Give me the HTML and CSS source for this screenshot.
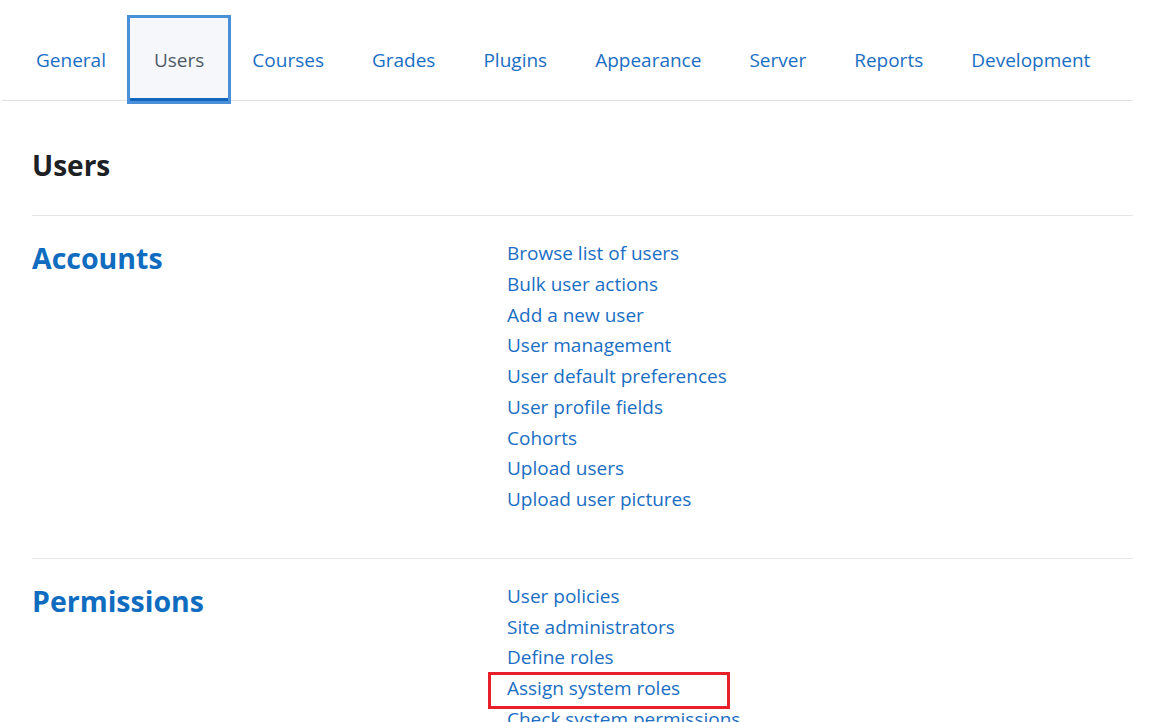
FILE: index.html
```html
<!DOCTYPE html>
<html lang="en">
<head>
<meta charset="utf-8">
<title>Users - Site administration</title>
<link rel="stylesheet" href="styles.css">
</head>
<body>
<nav class="tabs">
  <a class="tab" href="#">General</a>
  <a class="tab active" href="#">Users</a>
  <a class="tab" href="#">Courses</a>
  <a class="tab" href="#">Grades</a>
  <a class="tab" href="#">Plugins</a>
  <a class="tab" href="#">Appearance</a>
  <a class="tab" href="#">Server</a>
  <a class="tab" href="#">Reports</a>
  <a class="tab" href="#">Development</a>
</nav>
<main class="content">
  <h2 class="page-title">Users</h2>
  <section class="group">
    <h3 class="group-title">Accounts</h3>
    <ul class="links">
      <li><a href="#">Browse list of users</a></li>
      <li><a href="#">Bulk user actions</a></li>
      <li><a href="#">Add a new user</a></li>
      <li><a href="#">User management</a></li>
      <li><a href="#">User default preferences</a></li>
      <li><a href="#">User profile fields</a></li>
      <li><a href="#">Cohorts</a></li>
      <li><a href="#">Upload users</a></li>
      <li><a href="#">Upload user pictures</a></li>
    </ul>
  </section>
  <section class="group">
    <h3 class="group-title">Permissions</h3>
    <ul class="links">
      <li><a href="#">User policies</a></li>
      <li><a href="#">Site administrators</a></li>
      <li><a href="#">Define roles</a></li>
      <li class="marked"><a href="#">Assign system roles</a><span class="mark"></span></li>
      <li><a href="#">Check system permissions</a></li>
    </ul>
  </section>
</main>
</body>
</html>
```
FILE: styles.css
```css
* { box-sizing: border-box; }
html, body { margin: 0; padding: 0; background: #fff; }
body {
  font-family: "Open Sans", "Noto Sans", "Liberation Sans", sans-serif;
  color: #1d2125;
  overflow: hidden;
  height: 722px;
}
a { text-decoration: none; color: #1a6ec3; }

.tabs {
  display: flex;
  margin: 0 43px 0 2px;
  padding: 18px 0 0 10px;
  border-bottom: 1px solid #dee2e6;
}
.tab {
  display: flex;
  align-items: center;
  height: 83px;
  padding: 0 24px;
  margin-bottom: -1px;
  font-size: 19px;
  color: #1a6ec3;
}
.tab.active {
  background: #f5f7fa;
  color: #4f5a66;
  outline: 3px solid #4a90d9;
  box-shadow: inset 0 -3px 0 #1166c0;
}

.content { padding: 0 43px 0 32px; }
.page-title {
  margin: 44px 0 0;
  font-size: 28px;
  line-height: 40px;
  font-weight: 700;
  padding-bottom: 30px;
  border-bottom: 1px solid #e4e6e8;
}
.group {
  display: grid;
  grid-template-columns: 475px 1fr;
  padding: 22px 0 43px;
  border-bottom: 1px solid #e4e6e8;
}
.group-title {
  margin: 0;
  font-size: 28.5px;
  line-height: 40px;
  font-weight: 700;
  color: #0f6cbf;
}
.links { list-style: none; margin: 0; padding: 0; }
.links li {
  position: relative;
  font-size: 19px;
  line-height: 30.75px;
}
.mark {
  position: absolute;
  left: -19px;
  top: -1px;
  width: 242px;
  height: 37px;
  border: 3px solid #e8202a;
  pointer-events: none;
}
```
